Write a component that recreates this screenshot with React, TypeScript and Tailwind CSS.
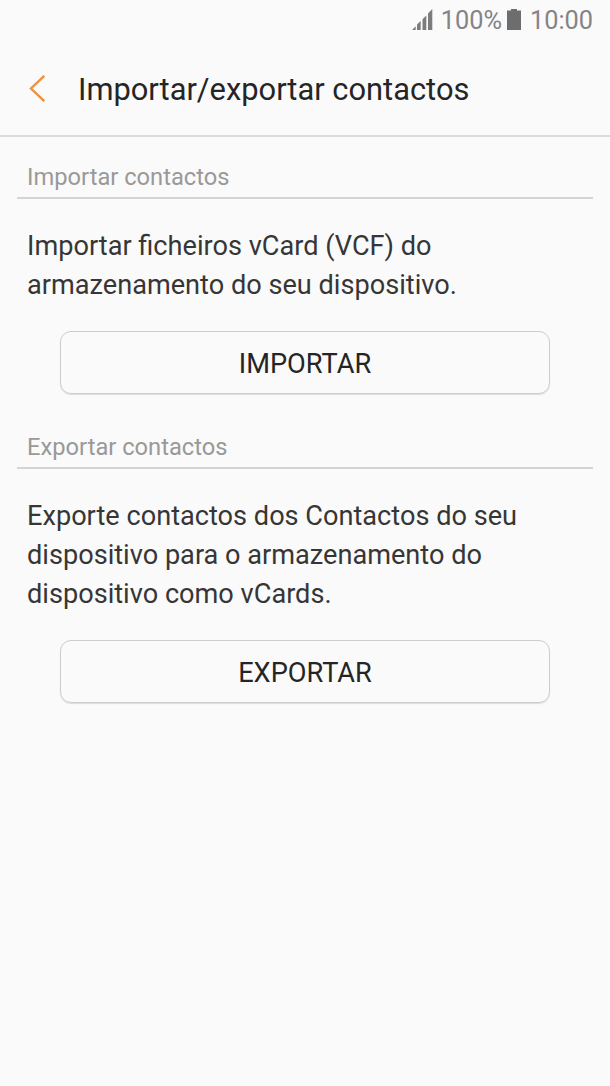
import type { ReactNode } from "react";

interface SectionProps {
  title: string;
  lines: string[];
  action: string;
}

function StatusBar() {
  return (
    <div className="flex h-10 items-center justify-end pr-[17px] text-[25.3px] leading-10 text-[#848484]">
      <svg className="mr-[8px] mb-px" width="21" height="21" viewBox="0 0 21 21" fill="#7c7c7c">
        <path d="M0 21 3.7 17.3V21zM5 15.6 8.7 12V21H5zM10.5 10.2 14.3 6.5V21h-3.800zM16 4.500 20.300 0V21H16z" />
      </svg>
      <span className="pt-px">100%</span>
      <svg className="mr-[9px] mb-px ml-[5px]" width="14" height="21" viewBox="0 0 14 21" fill="#6d6d6d">
        <path d="M4 0h6v1.5h4V21H0V1.5h4z" />
      </svg>
      <span className="pt-px">10:00</span>
    </div>
  );
}

function Header({ children }: { children: ReactNode }) {
  return (
    <header className="flex h-[97px] items-center border-b-2 border-[#dcdcdc] text-[#252525]">
      <svg className="mt-px mr-[32px] ml-[29px]" width="17" height="27" viewBox="0 0 17 27" fill="none" stroke="#f0923b" strokeWidth="2.4">
        <path d="M15.3 .8 2 13.5l13.3 12.7" />
      </svg>
      <h1 className="pt-1.5 text-[30.85px]">{children}</h1>
    </header>
  );
}

function Section({ title, lines, action }: SectionProps) {
  return (
    <section className="px-[17px]">
      <h2 className="h-[40px] border-b-2 border-[#d4d4d4] pl-[10px] text-[23.7px] leading-[37px] text-[#999]">{title}</h2>
      <p className="mt-[28px] pl-[10px] text-[27.15px] leading-[39px] text-[#363636]">
        {lines.map((line) => (
          <span key={line} className="block whitespace-nowrap">{line}</span>
        ))}
      </p>
      <button className="mx-[43px] mt-[26px] block h-[63px] w-[490px] rounded-[11px] border border-[#cdcdcd] pt-[3px] text-[27.2px] text-[#252525] shadow-[0_1px_1px_#ddd]">
        {action}
      </button>
    </section>
  );
}

export default function App() {
  return (
    <main className="h-[1086px] w-[610px] overflow-hidden bg-[#fafafa] font-['Roboto',sans-serif]">
      <StatusBar />
      <Header>Importar/exportar contactos</Header>
      <div className="flex flex-col gap-[35.4px] pt-[22px]">
        <Section
          title="Importar contactos"
          lines={["Importar ficheiros vCard (VCF) do", "armazenamento do seu dispositivo."]}
          action="IMPORTAR"
        />
        <Section
          title="Exportar contactos"
          lines={["Exporte contactos dos Contactos do seu", "dispositivo para o armazenamento do", "dispositivo como vCards."]}
          action="EXPORTAR"
        />
      </div>
    </main>
  );
}
